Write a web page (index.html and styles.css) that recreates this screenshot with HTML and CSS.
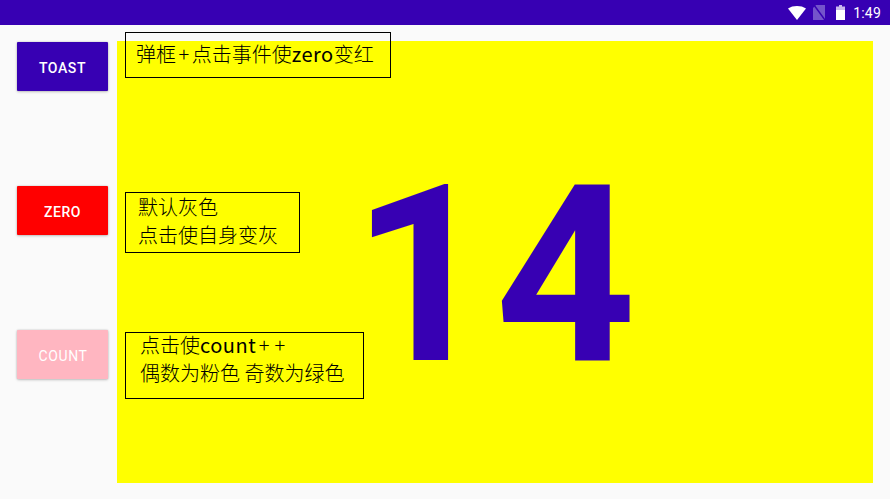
FILE: index.html
```html
<!DOCTYPE html>
<html lang="zh">
<head>
  <meta charset="UTF-8">
  <meta name="viewport" content="width=device-width, initial-scale=1.0">
  <title>Hello Toast</title>
  <link rel="stylesheet" href="styles.css">
</head>
<body>
  <div class="status-bar">
    <svg class="icon-wifi" width="18" height="14" viewBox="0 0 18 14"><path d="M0 2.500C2.500.8 5.600 0 9 0s6.500.8 9 2.500L9 14z" fill="#fff"/></svg>
    <svg class="icon-sim" width="12" height="15" viewBox="0 0 12 15"><path d="M3 0h9v15H0V3z" fill="#7454cb"/><path d="M1 0l11 15" stroke="#3700b3" stroke-width="1.500"/></svg>
    <svg class="icon-battery" width="9" height="15" viewBox="0 0 9 15"><path d="M3 0h3v1.500h3V5H0V1.500h3z" fill="#c9b8ee"/><path d="M0 5h9v10H0z" fill="#fff"/></svg>
    <span class="clock">1:49</span>
  </div>

  <div class="main">
    <div class="side-buttons">
      <button class="btn btn-toast">Toast</button>
      <button class="btn btn-zero">Zero</button>
      <button class="btn btn-count">Count</button>
    </div>
    <div class="count-panel">
      <span class="count-number">14</span>
    </div>

    <div class="note note-toast">弹框<span class="plus">+</span>点击事件使<span class="latin">zero</span>变红</div>
    <div class="note note-zero">默认灰色<br>点击使自身变灰</div>
    <div class="note note-count"><div class="note-text">点击使<span class="latin">count</span><span class="plus">+</span><span class="plus">+</span><br>偶数为粉色 奇数为绿色</div></div>
  </div>
</body>
</html>
```

FILE: styles.css
```css
body {
  margin: 0;
  height: 499px;
  overflow: hidden;
  background: #fafafa;
  font-family: Roboto, sans-serif;
}

.status-bar {
  height: 25px;
  background: #3700b3;
  display: flex;
  align-items: center;
  justify-content: flex-end;
  padding-right: 9px;
  color: #fff;
}

.icon-wifi {
  margin-right: 7px;
}

.icon-sim {
  margin-right: 11px;
}

.icon-battery {
  margin-right: 8px;
}

.clock {
  font-size: 14px;
  letter-spacing: 0.2px;
}

.main {
  position: relative;
  display: flex;
  padding: 16px 17px 0;
}

.side-buttons {
  width: 91px;
  margin-right: 9px;
  padding-top: 1px;
  display: flex;
  flex-direction: column;
  gap: 95px;
}

.btn {
  width: 91px;
  height: 49px;
  padding: 2px 0 0;
  border: none;
  border-radius: 1px;
  color: #fff;
  font-family: Roboto, sans-serif;
  font-size: 14px;
  font-weight: 500;
  letter-spacing: 0.6px;
  text-transform: uppercase;
  box-shadow: 0 0 2px rgba(0, 0, 0, 0.2), 0 1px 3px rgba(0, 0, 0, 0.2);
}

.btn-toast {
  background: #3700b3;
}

.btn-zero {
  background: #ff0000;
}

.btn-count {
  background: #ffb6c1;
  font-weight: 400;
  padding-left: 1px;
}

.count-panel {
  box-sizing: border-box;
  width: 756px;
  height: 442px;
  padding-top: 28px;
  background: #ffff00;
  display: flex;
  align-items: center;
  justify-content: center;
}

.count-number {
  color: #3700b3;
  font-size: 246px;
  font-weight: 700;
  letter-spacing: 2px;
  line-height: 1;
}

.note {
  position: absolute;
  left: 125px;
  box-sizing: border-box;
  border: 1px solid #000;
  color: #000;
  font-family: "Noto Sans CJK SC", sans-serif;
  font-size: 20px;
  font-weight: 300;
  line-height: 28px;
  white-space: nowrap;
}

.latin {
  font-weight: 400;
  letter-spacing: 0.5px;
}

.plus {
  padding: 0 2.500px;
}

.note-toast {
  top: 7px;
  width: 266px;
  height: 46px;
  padding: 7px 10px;
}

.note-zero {
  top: 167px;
  width: 175px;
  height: 61px;
  padding: 0 12px;
}

.note-count {
  top: 307px;
  width: 239px;
  height: 67px;
  padding: 0 14px;
}

.note-text {
  margin-top: -2px;
}
```
